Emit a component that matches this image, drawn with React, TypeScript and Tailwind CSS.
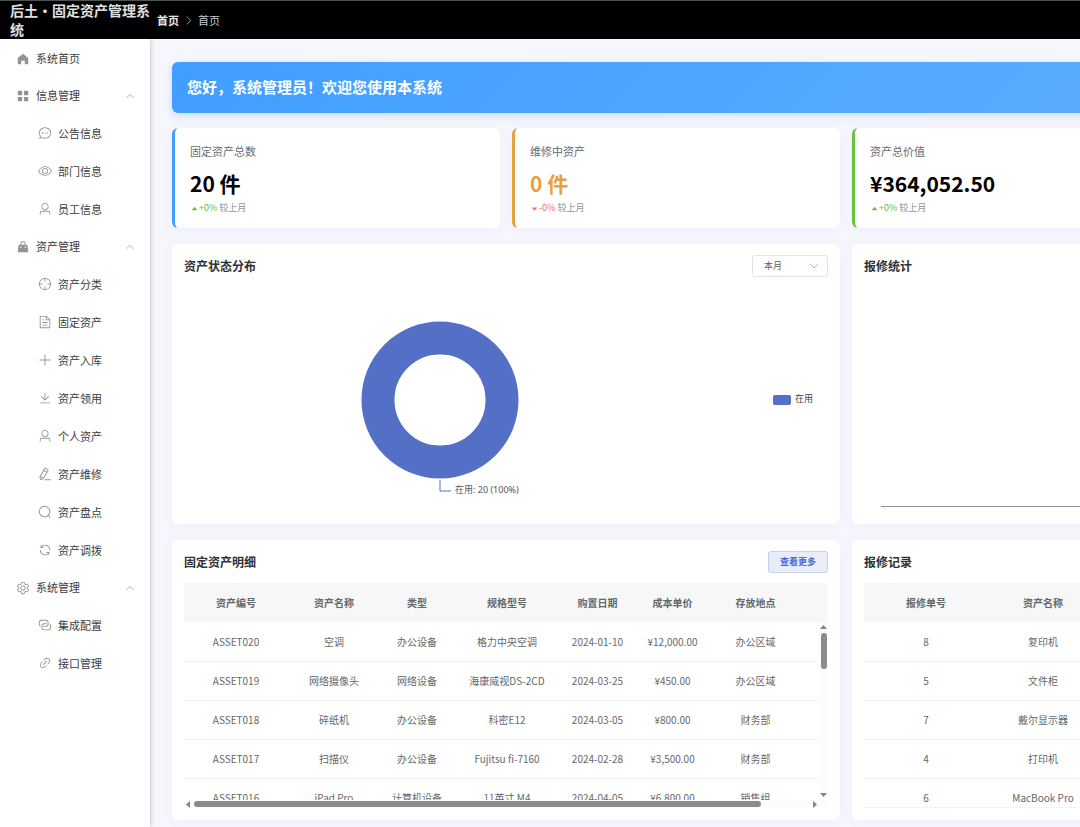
import * as React from "react";
import { useState } from "react";

interface IconProps {
  path: string;
  className?: string;
}

const Icon = ({ path, className = "size-[14px]" }: IconProps) => (
  <svg
    viewBox="0 0 1024 1024"
    className={`shrink-0 ${className}`}
    fill="currentColor"
    aria-hidden="true"
  >
    <path d={path} />
  </svg>
);

const icons = {
  home: "M512 128 128 447.936V896h255.936V640H640v256h255.936V447.936z",
  menu: "M160 448a32 32 0 0 1-32-32V160a32 32 0 0 1 32-32h256a32 32 0 0 1 32 32v256a32 32 0 0 1-32 32zm448 0a32 32 0 0 1-32-32V160a32 32 0 0 1 32-32h256a32 32 0 0 1 32 32v256a32 32 0 0 1-32 32zM160 896a32 32 0 0 1-32-32V608a32 32 0 0 1 32-32h256a32 32 0 0 1 32 32v256a32 32 0 0 1-32 32zm448 0a32 32 0 0 1-32-32V608a32 32 0 0 1 32-32h256a32 32 0 0 1 32 32v256a32 32 0 0 1-32 32z",
  chat: "m174.72 855.68 135.296-45.12 23.68 11.84C388.096 849.536 448.576 864 512 864c211.84 0 384-166.784 384-352S723.84 160 512 160 128 326.784 128 512c0 69.12 24.96 139.264 70.848 199.232l22.08 28.8-46.272 115.584zm-45.248 82.56A32 32 0 0 1 89.6 896l58.368-145.92C94.72 680.32 64 596.864 64 512 64 299.904 256 96 512 96s448 203.904 448 416-192 416-448 416a461 461 0 0 1-206.912-48.384zM512 563.2a51.2 51.2 0 1 1 0-102.4 51.2 51.2 0 0 1 0 102.4m192 0a51.2 51.2 0 1 1 0-102.4 51.2 51.2 0 0 1 0 102.4m-384 0a51.2 51.2 0 1 1 0-102.4 51.2 51.2 0 0 1 0 102.4",
  view: "M512 160c320 0 512 352 512 352S832 864 512 864 0 512 0 512s192-352 512-352m0 64c-225.28 0-384.128 208.064-436.8 288 52.608 79.872 211.456 288 436.8 288 225.28 0 384.128-208.064 436.8-288-52.608-79.872-211.456-288-436.8-288m0 64a224 224 0 1 1 0 448 224 224 0 0 1 0-448m0 64a160.192 160.192 0 0 0-160 160c0 88.192 71.744 160 160 160s160-71.808 160-160-71.744-160-160-160",
  user: "M512 512a192 192 0 1 0 0-384 192 192 0 0 0 0 384m0 64a256 256 0 1 1 0-512 256 256 0 0 1 0 512m320 320v-96a96 96 0 0 0-96-96H288a96 96 0 0 0-96 96v96a32 32 0 1 1-64 0v-96a160 160 0 0 1 160-160h448a160 160 0 0 1 160 160v96a32 32 0 1 1-64 0",
  goods:
    "M192 352h640l64 544H128zm128 224h64V448h-64zm320 0h64V448h-64zM384 288h-64a192 192 0 1 1 384 0h-64a128 128 0 1 0-256 0M320 288h64v64h-64zm320 0h64v64h-64z",
  aim: "M512 896a384 384 0 1 0 0-768 384 384 0 0 0 0 768m0 64a448 448 0 1 1 0-896 448 448 0 0 1 0 896M512 96a32 32 0 0 1 32 32v192a32 32 0 0 1-64 0V128a32 32 0 0 1 32-32m0 576a32 32 0 0 1 32 32v192a32 32 0 1 1-64 0V704a32 32 0 0 1 32-32M96 512a32 32 0 0 1 32-32h192a32 32 0 0 1 0 64H128a32 32 0 0 1-32-32m576 0a32 32 0 0 1 32-32h192a32 32 0 1 1 0 64H704a32 32 0 0 1-32-32",
  document:
    "M832 384H576V128H192v768h640zm-26.496-64L640 154.496V320zM160 64h480l256 256v608a32 32 0 0 1-32 32H160a32 32 0 0 1-32-32V96a32 32 0 0 1 32-32m160 448h384v64H320zm0-192h160v64H320zm0 384h384v64H320z",
  plus: "M480 480V128a32 32 0 0 1 64 0v352h352a32 32 0 1 1 0 64H544v352a32 32 0 1 1-64 0V544H128a32 32 0 0 1 0-64z",
  download:
    "M160 832h704a32 32 0 1 1 0 64H160a32 32 0 1 1 0-64m384-253.696 236.288-236.352 45.248 45.248L508.8 704 192 387.2l45.248-45.248L480 584.704V128h64z",
  edit: "m199.04 672.64 193.984 112 224-387.968-193.92-112-224 388.032zm-23.872 60.16 32.896 148.288 144.896-45.696zM455.04 229.248l193.92 112 56.704-98.112-193.984-112zM104.32 708.8l384-665.024 304.768 175.936L409.152 884.8h.064l-248.448 78.336zm384 254.272v-64h448v64z",
  search:
    "m795.904 750.72 124.992 124.928a32 32 0 0 1-45.248 45.248L750.656 795.904a416 416 0 1 1 45.248-45.248zM480 832a352 352 0 1 0 0-704 352 352 0 0 0 0 704",
  refresh:
    "M771.776 794.88A384 384 0 0 1 128 512h64a320 320 0 0 0 555.712 216.448H654.72a32 32 0 1 1 0-64h149.056a32 32 0 0 1 32 32v148.928a32 32 0 1 1-64 0v-50.56zM276.288 295.616h92.992a32 32 0 0 1 0 64H220.16a32 32 0 0 1-32-32V178.56a32 32 0 0 1 64 0v50.56A384 384 0 0 1 896.128 512h-64a320 320 0 0 0-555.776-216.384z",
  setting:
    "M600.704 64a32 32 0 0 1 30.464 22.208l35.2 109.376c14.784 7.232 28.928 15.36 42.432 24.512l112.384-24.192a32 32 0 0 1 34.432 15.36L944.32 364.8a32 32 0 0 1-4.032 37.504l-77.12 85.12a357 357 0 0 1 0 49.024l77.12 85.248a32 32 0 0 1 4.032 37.504l-88.704 153.6a32 32 0 0 1-34.432 15.296L708.8 803.904c-13.44 9.088-27.648 17.28-42.368 24.512l-35.264 109.376A32 32 0 0 1 600.704 960H423.296a32 32 0 0 1-30.464-22.208L357.696 828.48a352 352 0 0 1-42.56-24.64l-112.32 24.256a32 32 0 0 1-34.432-15.36L79.68 659.2a32 32 0 0 1 4.032-37.504l77.12-85.248a357 357 0 0 1 0-48.896l-77.12-85.248A32 32 0 0 1 79.68 364.8l88.704-153.6a32 32 0 0 1 34.432-15.296l112.32 24.256c13.568-9.152 27.776-17.408 42.56-24.64l35.2-109.312A32 32 0 0 1 423.232 64H600.64zm-23.424 64H446.72l-36.352 113.088-24.512 11.968a294 294 0 0 0-34.816 20.096l-22.656 15.36-116.224-25.088-65.28 113.152 79.68 88.192-1.92 27.136a293 293 0 0 0 0 40.192l1.92 27.136-79.808 88.192 65.344 113.152 116.224-25.024 22.656 15.296a294 294 0 0 0 34.816 20.096l24.512 11.968L446.72 896h130.688l36.48-113.152 24.448-11.904a288 288 0 0 0 34.752-20.096l22.592-15.296 116.288 25.024 65.28-113.152-79.744-88.192 1.92-27.136a293 293 0 0 0 0-40.256l-1.92-27.136 79.808-88.128-65.344-113.152-116.288 24.96-22.592-15.232a288 288 0 0 0-34.752-20.096l-24.448-11.904L577.344 128zM512 320a192 192 0 1 1 0 384 192 192 0 0 1 0-384m0 64a128 128 0 1 0 0 256 128 128 0 0 0 0-256",
  connection:
    "M640 384v64H448a128 128 0 0 0-128 128v128a128 128 0 0 0 128 128h320a128 128 0 0 0 128-128V576a128 128 0 0 0-64-110.848V394.88c74.56 26.368 128 97.472 128 181.056v128a192 192 0 0 1-192 192H448a192 192 0 0 1-192-192V576a192 192 0 0 1 192-192zM384 640v-64h192a128 128 0 0 0 128-128V320a128 128 0 0 0-128-128H256a128 128 0 0 0-128 128v128a128 128 0 0 0 64 110.848v70.272A192 192 0 0 1 64 448V320a192 192 0 0 1 192-192h320a192 192 0 0 1 192 192v128a192 192 0 0 1-192 192z",
  link: "M715.648 625.152 670.4 579.904l90.496-90.56c75.008-74.944 85.12-186.368 22.656-248.896-62.528-62.464-173.952-52.352-248.96 22.656L444.16 353.6l-45.248-45.248 90.496-90.496c100.032-99.968 251.968-110.08 339.456-22.656 87.488 87.488 77.312 239.424-22.656 339.456zm-90.496 90.496-90.496 90.496C434.624 906.112 282.688 916.224 195.2 828.8c-87.488-87.488-77.312-239.424 22.656-339.456l90.496-90.496 45.248 45.248-90.496 90.56c-75.008 74.944-85.12 186.368-22.656 248.896 62.528 62.464 173.952 52.352 248.96-22.656l90.496-90.496zm0-362.048 45.248 45.248L398.848 670.4 353.6 625.152z",
  caretTop: "M512 320 192 704h639.936z",
  caretBottom: "m192 384 320 384 320-384z",
};

const chevrons = {
  up: "M2 8 6 4l4 4",
  down: "M2 4l4 4 4-4",
  right: "M4 1l5 5-5 5",
};

const Chevron = ({
  direction,
  className,
}: {
  direction: keyof typeof chevrons;
  className: string;
}) => (
  <svg
    viewBox="0 0 12 12"
    className={className}
    fill="none"
    stroke="currentColor"
    strokeLinecap="round"
    strokeLinejoin="round"
    aria-hidden="true"
  >
    <path d={chevrons[direction]} />
  </svg>
);

interface MenuItem {
  label: string;
  icon: string;
}
interface MenuGroupProps extends MenuItem {
  items: MenuItem[];
}

const menuGroups: MenuGroupProps[] = [
  {
    label: "信息管理",
    icon: icons.menu,
    items: [
      { label: "公告信息", icon: icons.chat },
      { label: "部门信息", icon: icons.view },
      { label: "员工信息", icon: icons.user },
    ],
  },
  {
    label: "资产管理",
    icon: icons.goods,
    items: [
      { label: "资产分类", icon: icons.aim },
      { label: "固定资产", icon: icons.document },
      { label: "资产入库", icon: icons.plus },
      { label: "资产领用", icon: icons.download },
      { label: "个人资产", icon: icons.user },
      { label: "资产维修", icon: icons.edit },
      { label: "资产盘点", icon: icons.search },
      { label: "资产调拨", icon: icons.refresh },
    ],
  },
  {
    label: "系统管理",
    icon: icons.setting,
    items: [
      { label: "集成配置", icon: icons.connection },
      { label: "接口管理", icon: icons.link },
    ],
  },
];

const MenuGroup = ({ label, icon, items }: MenuGroupProps) => {
  const [open, setOpen] = useState(true);
  return (
    <li>
      <button
        type="button"
        aria-expanded={open}
        onClick={() => setOpen(!open)}
        className="flex h-[37px] w-full cursor-pointer items-center gap-[6px] pl-4 pr-[15px] hover:bg-[#ecf5ff]"
      >
        <span className="flex text-[#909399]">
          <Icon path={icon} />
        </span>
        {label}
        <Chevron
          direction={open ? "up" : "down"}
          className="ml-auto size-[10px] text-[#a0a3a9]"
        />
      </button>
      {open && (
        <ul>
          {items.map((item) => (
            <li key={item.label}>
              <a
                href="#"
                className="flex h-[38px] items-center gap-[6px] pl-[38px] hover:bg-[#ecf5ff]"
              >
                <span className="flex text-[#909399]">
                  <Icon path={item.icon} />
                </span>
                {item.label}
              </a>
            </li>
          ))}
        </ul>
      )}
    </li>
  );
};

const Sidebar = () => (
  <nav className="z-10 w-[150px] shrink-0 overflow-hidden bg-white pt-px text-[11px] text-[#3c3d40] shadow-[1px_0_4px_rgba(0,21,41,0.2)]">
    <ul>
      <li>
        <a
          href="#"
          className="flex h-[37px] items-center gap-[6px] pl-4 hover:bg-[#ecf5ff]"
        >
          <span className="flex text-[#909399]">
            <Icon path={icons.home} />
          </span>
          系统首页
        </a>
      </li>
      {menuGroups.map((group) => (
        <MenuGroup key={group.label} {...group} />
      ))}
    </ul>
  </nav>
);

interface StatCardProps {
  label: string;
  value: string;
  change: string;
  down?: boolean;
  borderClass: string;
  valueClass?: string;
}

const StatCard = ({
  label,
  value,
  change,
  down = false,
  borderClass,
  valueClass = "text-black",
}: StatCardProps) => (
  <section
    className={`rounded-md border-l-[3px] bg-white px-[15px] pb-[13px] pt-[15px] shadow-[0_2px_12px_rgba(80,90,180,0.06)] ${borderClass}`}
  >
    <h3 className="text-[11px] leading-4 text-[#6a6c70]">{label}</h3>
    <p className={`mt-[10px] text-[21px] font-bold leading-7 ${valueClass}`}>
      {value}
    </p>
    <p className="mt-1 flex items-center text-[9px] leading-[14px] text-[#909399]">
      <span
        className={`flex items-center ${
          down ? "text-[#f56c6c]" : "text-[#67c23a]"
        }`}
      >
        <Icon
          path={down ? icons.caretBottom : icons.caretTop}
          className="size-[9px]"
        />
        {change}
      </span>
      <span className="ml-[2px]">较上月</span>
    </p>
  </section>
);

interface PanelProps {
  title: string;
  action?: React.ReactNode;
  children: React.ReactNode;
}

const Panel = ({ title, action, children }: PanelProps) => (
  <section className="col-span-2 rounded-md bg-white px-3 pb-3 pt-[11px] shadow-[0_2px_12px_rgba(80,90,180,0.06)]">
    <div className="flex h-[22px] items-center justify-between">
      <h2 className="text-xs font-bold text-[#303133]">{title}</h2>
      {action}
    </div>
    {children}
  </section>
);

const StatusChart = () => (
  <svg
    viewBox="0 0 644 235"
    className="h-[235px] w-full font-['Noto_Sans','Noto_Sans_CJK_SC',sans-serif] text-[9px]"
    role="img"
    aria-label="资产状态分布"
  >
    <circle
      cx="256"
      cy="123"
      r="62"
      fill="none"
      stroke="#5470c6"
      strokeWidth="33"
    />
    <path d="M256 203v11h11" fill="none" stroke="#5470c6" />
    <text x="271" y="216" fill="#555">
      在用: 20 (100%)
    </text>
    <rect x="589" y="118" width="18" height="10" rx="2" fill="#5470c6" />
    <text x="611" y="125" fill="#444">
      在用
    </text>
  </svg>
);

const RepairChart = () => (
  <svg
    viewBox="0 0 644 235"
    className="h-[235px] w-full"
    role="img"
    aria-label="报修统计"
  >
    <path d="M17 229.500h610" stroke="#8f9197" />
  </svg>
);

interface DataTableProps {
  columns: string[];
  widths: number[];
  rows: string[][];
}

const DataTable = ({ columns, widths, rows }: DataTableProps) => (
  <table className="w-full table-fixed border-collapse text-center text-[10px] text-[#65676b]">
    <colgroup>
      {widths.map((width, i) => (
        <col key={i} style={{ width }} />
      ))}
      <col />
    </colgroup>
    <thead>
      <tr className="h-[39px] bg-[#f7f7f7]">
        {columns.map((column) => (
          <th key={column} className="font-bold">
            {column}
          </th>
        ))}
        <td />
      </tr>
    </thead>
    <tbody>
      {rows.map((row) => (
        <tr key={row[0]} className="h-[39px] border-b border-[#f2f3f6]">
          {row.map((cell, i) => (
            <td key={i} className="whitespace-nowrap">
              {cell}
            </td>
          ))}
          <td />
        </tr>
      ))}
    </tbody>
  </table>
);

const assetColumns = [
  "资产编号",
  "资产名称",
  "类型",
  "规格型号",
  "购置日期",
  "成本单价",
  "存放地点",
];
const assetWidths = [104, 92, 74, 106, 75, 75, 91];
const assetRows = [
  ["ASSET020", "空调", "办公设备", "格力中央空调", "2024-01-10", "¥12,000.00", "办公区域"],
  ["ASSET019", "网络摄像头", "网络设备", "海康威视DS-2CD", "2024-03-25", "¥450.00", "办公区域"],
  ["ASSET018", "碎纸机", "办公设备", "科密E12", "2024-03-05", "¥800.00", "财务部"],
  ["ASSET017", "扫描仪", "办公设备", "Fujitsu fi-7160", "2024-02-28", "¥3,500.00", "财务部"],
  ["ASSET016", "iPad Pro", "计算机设备", "11英寸 M4", "2024-04-05", "¥6,800.00", "销售组"],
];

const repairColumns = ["报修单号", "资产名称"];
const repairWidths = [124, 110];
const repairRows = [
  ["8", "复印机"],
  ["5", "文件柜"],
  ["7", "戴尔显示器"],
  ["4", "打印机"],
  ["6", "MacBook Pro"],
];

const arrows = {
  up: "M1 7h7L4.500 3z",
  down: "M1 2h7L4.500 6z",
  left: "M6 1v7L2 4.500z",
  right: "M3 1v7l4-3.500z",
};

const ScrollArrow = ({ direction }: { direction: keyof typeof arrows }) => (
  <svg
    viewBox="0 0 9 9"
    className="size-[9px] shrink-0"
    fill="#858585"
    aria-hidden="true"
  >
    <path d={arrows[direction]} />
  </svg>
);

const AssetTable = () => (
  <div className="mt-[10px]">
    <div className="relative h-[217px] overflow-hidden">
      <DataTable columns={assetColumns} widths={assetWidths} rows={assetRows} />
      <div className="absolute bottom-0 right-0 top-[39px] flex w-[9px] flex-col items-center bg-[#fcfcfc]">
        <ScrollArrow direction="up" />
        <div className="flex w-full flex-1 flex-col items-center pt-[2px]">
          <div className="h-9 w-[6px] rounded-full bg-[#8b8b8b]" />
        </div>
        <ScrollArrow direction="down" />
      </div>
    </div>
    <div className="flex h-2 items-center bg-[#fcfcfc] pr-[9px]">
      <ScrollArrow direction="left" />
      <div className="flex-1 pl-px">
        <div className="h-[6px] w-[92%] rounded-full bg-[#8b8b8b]" />
      </div>
      <ScrollArrow direction="right" />
    </div>
  </div>
);

const PeriodSelect = () => {
  const [period, setPeriod] = useState("month");
  return (
    <div className="relative flex">
      <select
        aria-label="统计周期"
        value={period}
        onChange={(e) => setPeriod(e.target.value)}
        className="h-[22px] w-[76px] appearance-none rounded-[3px] border border-[#e0e3e9] bg-white pl-[11px] text-[9px] text-[#606266] outline-none"
      >
        <option value="month">本月</option>
      </select>
      <Chevron
        direction="down"
        className="pointer-events-none absolute right-2 top-[5px] size-3 text-[#b4b7bd]"
      />
    </div>
  );
};

export default function App() {
  return (
    <div className="flex h-screen flex-col overflow-hidden font-['Noto_Sans_CJK_SC',sans-serif]">
      <header className="flex h-[39px] shrink-0 items-center border-t border-[#4b5250] bg-black">
        <h1 className="w-[157px] shrink-0 pl-[10px] pr-[5px] text-sm font-bold leading-[19px] text-[#e0e0e0]">
          后土·固定资产管理系统
        </h1>
        <nav
          aria-label="面包屑"
          className="flex items-center gap-[5px] text-[11px] text-[#c8c9cc]"
        >
          <a href="#" className="font-bold text-[#e5e5e5]">
            首页
          </a>
          <Chevron direction="right" className="size-[9px]" />
          <span>首页</span>
        </nav>
      </header>
      <div className="flex min-h-0 flex-1">
        <Sidebar />
        <main className="min-w-0 flex-1 overflow-hidden bg-[#f6f7fd] px-[22px] pt-[23px]">
          <div className="flex min-w-[1348px] flex-col gap-[15px]">
            <div className="flex h-[51px] items-center rounded-md bg-[linear-gradient(135deg,#409eff,#66b1ff)] px-[15px] shadow-[0_3px_9px_rgba(64,110,220,0.2)]">
              <p className="text-[15px] font-bold text-white">
                您好，系统管理员！欢迎您使用本系统
              </p>
            </div>
            <div className="grid grid-cols-4 gap-x-3 gap-y-4">
              <StatCard
                label="固定资产总数"
                value="20 件"
                change="+0%"
                borderClass="border-[#409eff]"
              />
              <StatCard
                label="维修中资产"
                value="0 件"
                change="-0%"
                down
                borderClass="border-[#e6a23c]"
                valueClass="text-[#e6a23c]"
              />
              <StatCard
                label="资产总价值"
                value="¥364,052.50"
                change="+0%"
                borderClass="border-[#67c23a]"
              />
              {/* the panels below each take half of the four columns */}
              <div className="col-span-4 grid grid-cols-4 gap-x-3 gap-y-4">
                <Panel title="资产状态分布" action={<PeriodSelect />}>
                  <StatusChart />
                </Panel>
                <Panel title="报修统计">
                  <RepairChart />
                </Panel>
                <Panel
                  title="固定资产明细"
                  action={
                    <button
                      type="button"
                      className="h-[22px] cursor-pointer rounded-[3px] border border-[#c6d0ee] bg-[#e8edf9] px-[11px] text-[9px] font-bold text-[#4a6fd4]"
                    >
                      查看更多
                    </button>
                  }
                >
                  <AssetTable />
                </Panel>
                <Panel title="报修记录">
                  <div className="mt-[10px] h-[225px] overflow-hidden border-b border-[#f2f3f6]">
                    <DataTable
                      columns={repairColumns}
                      widths={repairWidths}
                      rows={repairRows}
                    />
                  </div>
                </Panel>
              </div>
            </div>
          </div>
        </main>
      </div>
    </div>
  );
}
